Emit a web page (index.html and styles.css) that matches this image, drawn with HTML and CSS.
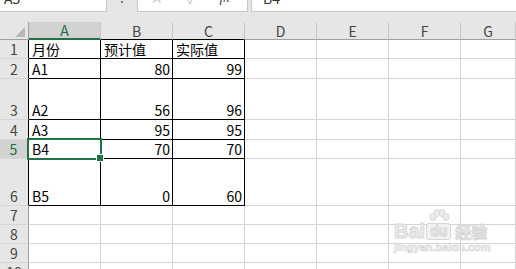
FILE: index.html
```html
<!DOCTYPE html>
<html lang="zh-CN">
<head>
<meta charset="utf-8">
<link rel="stylesheet" href="styles.css">
</head>
<body>
<div class="app">
  <div class="topbar">
    <div class="namebox"><span class="tb-text">A5</span></div>
    <div class="tb-sep"><span class="dots"></span></div>
    <div class="fbtns">
      <span class="fb-x">✕</span>
      <span class="fb-ok">✓</span>
      <span class="fb-fx">fx</span>
    </div>
    <div class="finput"><span class="tb-text">B4</span></div>
  </div>
  <div class="gap"></div>
  <div class="sheet">
    <div class="hdr corner"><span class="tri"></span></div>
    <div class="hdr col sel">A</div>
    <div class="hdr col tb">B</div>
    <div class="hdr col tb">C</div>
    <div class="hdr col">D</div>
    <div class="hdr col">E</div>
    <div class="hdr col">F</div>
    <div class="hdr col">G</div>

    <div class="hdr row tl">1</div>
    <div class="c t">月份</div><div class="c t">预计值</div><div class="c t">实际值</div>
    <div class="c"></div><div class="c"></div><div class="c"></div><div class="c"></div>

    <div class="hdr row tl">2</div>
    <div class="c t">A1</div><div class="c t n">80</div><div class="c t n">99</div>
    <div class="c"></div><div class="c"></div><div class="c"></div><div class="c"></div>

    <div class="hdr row tl">3</div>
    <div class="c t">A2</div><div class="c t n">56</div><div class="c t n">96</div>
    <div class="c"></div><div class="c"></div><div class="c"></div><div class="c"></div>

    <div class="hdr row tl">4</div>
    <div class="c t">A3</div><div class="c t n">95</div><div class="c t n">95</div>
    <div class="c"></div><div class="c"></div><div class="c"></div><div class="c"></div>

    <div class="hdr row tl rsel">5</div>
    <div class="c t active">B4<span class="handle"></span></div><div class="c t n">70</div><div class="c t n">70</div>
    <div class="c"></div><div class="c"></div><div class="c"></div><div class="c"></div>

    <div class="hdr row tl">6</div>
    <div class="c t">B5</div><div class="c t n">0</div><div class="c t n">60</div>
    <div class="c"></div><div class="c"></div><div class="c"></div><div class="c"></div>

    <div class="hdr row">7</div>
    <div class="c"></div><div class="c"></div><div class="c"></div>
    <div class="c"></div><div class="c"></div><div class="c"></div><div class="c"></div>

    <div class="hdr row">8</div>
    <div class="c"></div><div class="c"></div><div class="c"></div>
    <div class="c"></div><div class="c"></div><div class="c"></div><div class="c"></div>

    <div class="hdr row">9</div>
    <div class="c"></div><div class="c"></div><div class="c"></div>
    <div class="c"></div><div class="c"></div><div class="c"></div><div class="c"></div>

    <div class="hdr row">10</div>
    <div class="c"></div><div class="c"></div><div class="c"></div>
    <div class="c"></div><div class="c"></div><div class="c"></div><div class="c"></div>
  </div>
  <div class="watermark">
    <div class="wm-top">
      <span class="wm-bai">Bai</span>
      <span class="wm-du">
        <svg class="paw" width="24" height="13" viewBox="0 0 24 13">
          <ellipse cx="6" cy="8" rx="3" ry="3.5" fill="#ececec" stroke="#d8d8d8"/>
          <ellipse cx="10" cy="4" rx="3" ry="3.5" fill="#ececec" stroke="#d8d8d8"/>
          <ellipse cx="15" cy="4" rx="3" ry="3.5" fill="#ececec" stroke="#d8d8d8"/>
          <ellipse cx="19" cy="8" rx="3" ry="3.5" fill="#ececec" stroke="#d8d8d8"/>
        </svg>
        <span class="wm-dubox">du</span>
      </span>
      <span class="wm-jy">经验</span>
    </div>
    <div class="wm-url">jingyan.baidu.com</div>
  </div>
</div>
</body>
</html>
```
FILE: styles.css
```css
* { box-sizing: border-box; }
html, body { margin: 0; padding: 0; }
body {
  width: 516px;
  height: 269px;
  overflow: hidden;
  background: #e6e6e6;
  font-family: "Noto Sans CJK SC", "Noto Sans", sans-serif;
}
.app { position: relative; width: 516px; height: 269px; overflow: hidden; }

.topbar {
  display: flex;
  height: 12px;
  background: #e6e6e6;
}
.namebox, .fbtns, .finput {
  background: #fff;
  border-bottom: 1px solid #c6c6c6;
  overflow: hidden;
}
.namebox { width: 107px; border-right: 1px solid #c6c6c6; padding-left: 4px; }
.tb-sep { width: 30px; position: relative; }
.dots {
  position: absolute; left: 14px; top: 1px;
  width: 2px; height: 2px; background: #7a7a7a;
}
.fbtns {
  width: 111px;
  border-left: 1px solid #c6c6c6;
  border-right: 1px solid #c6c6c6;
  display: flex;
  align-items: flex-start;
}
.finput { flex: 1; border-left: 1px solid #c6c6c6; margin-left: 3px; padding-left: 11px; }
.tb-text {
  display: block;
  margin-top: -11px;
  font-size: 14px;
  line-height: 18px;
  color: #333;
}
.fbtns span {
  display: block;
  margin-top: -11px;
  font-size: 14px;
  line-height: 18px;
}
.fb-x { margin-left: 13px; color: #c8c8c8; }
.fb-ok { margin-left: 24px; color: #c8c8c8; }
.fb-fx { margin-left: 23px; color: #444; font-style: italic; font-family: "Liberation Serif", serif; }

.gap { height: 10px; }

.sheet {
  display: grid;
  grid-template-columns: 29px repeat(6, 72px) 1fr;
  grid-template-rows: 18px 19px 20px 41px 20px 19px 47px 19px 19px 19px 19px;
  background: #fff;
}
.hdr {
  background: #e6e6e6;
  color: #444;
  font-size: 14px;
  display: flex;
  align-items: flex-end;
  justify-content: center;
  line-height: 16px;
}
.col {
  border-right: 1px solid #c8c8c8;
  border-bottom: 1px solid #9e9e9e;
  padding-bottom: 0;
}
.col.tb { border-bottom-color: #000; }
.col.sel {
  background: #d2d2d2;
  color: #1e6e42;
  border-bottom: 2px solid #217346;
}
.corner {
  position: relative;
  border-right: 1px solid #9e9e9e;
  border-bottom: 1px solid #9e9e9e;
}
.tri {
  position: absolute;
  right: 3px;
  bottom: 2px;
  width: 0; height: 0;
  border-left: 10px solid transparent;
  border-bottom: 10px solid #b8b8b8;
}
.row {
  border-right: 1px solid #9e9e9e;
  border-bottom: 1px solid #d6d6d6;
  padding-bottom: 1px;
}
.row.tl { border-right-color: #000; }
.row.rsel {
  background: #d2d2d2;
  color: #1e6e42;
  border-right: 2px solid #217346;
}

.c {
  border-right: 1px solid #d4d4d4;
  border-bottom: 1px solid #d4d4d4;
  font-size: 14px;
  line-height: 16px;
  color: #000;
  display: flex;
  align-items: flex-end;
  padding: 0 2px 1px 3px;
  white-space: nowrap;
  overflow: hidden;
}
.c.t { border-right-color: #000; border-bottom-color: #000; }
.c.n { justify-content: flex-end; }

.active { position: relative; overflow: visible; }
.active::after {
  content: "";
  position: absolute;
  left: -2px; top: -2px; right: -2px; bottom: -2px;
  border: 2px solid #217346;
  pointer-events: none;
}
.handle {
  position: absolute;
  right: -4px;
  bottom: -4px;
  width: 6px;
  height: 6px;
  background: #217346;
  border: 1px solid #fff;
  box-sizing: content-box;
  z-index: 2;
}

.watermark {
  position: absolute;
  left: 394px;
  top: 206px;
  width: 100px;
  color: #eeeeee;
  -webkit-text-stroke: 1px #d6d6d6;
}
.wm-top { display: flex; align-items: flex-end; height: 34px; }
.wm-bai { font-family: "Liberation Sans", sans-serif; font-weight: bold; font-size: 20px; line-height: 18px; }
.wm-du { display: flex; flex-direction: column; align-items: center; margin-left: 1px; }
.paw { display: block; margin-bottom: 1px; }
.wm-dubox {
  display: block;
  font-family: "Liberation Sans", sans-serif;
  font-weight: bold;
  font-size: 14px;
  line-height: 14px;
  padding: 0 3px 1px;
  border: 1px solid #d6d6d6;
  border-radius: 3px;
  background: #f2f2f2;
}
.wm-jy { font-size: 16px; line-height: 18px; margin-left: 4px; font-weight: bold; }
.wm-url {
  font-family: "Liberation Sans", sans-serif;
  font-size: 11px;
  line-height: 12px;
  font-weight: bold;
  margin-top: 1px;
  -webkit-text-stroke: 0.6px #d6d6d6;
}
```
